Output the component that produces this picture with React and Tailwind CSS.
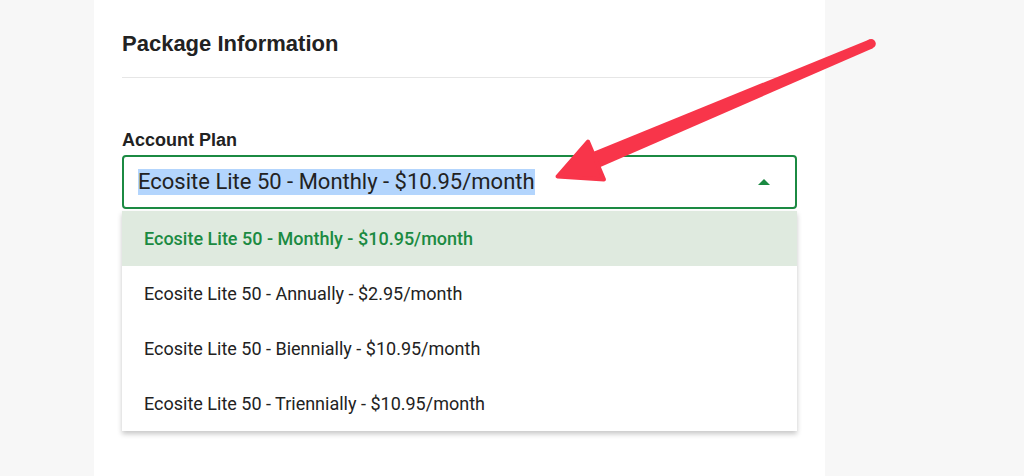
import React from 'react';

const plans = [
  'Ecosite Lite 50 - Monthly - $10.95/month',
  'Ecosite Lite 50 - Annually - $2.95/month',
  'Ecosite Lite 50 - Biennially - $10.95/month',
  'Ecosite Lite 50 - Triennially - $10.95/month',
];

function PointerArrow() {
  return (
    <svg
      className="absolute left-0 top-0 pointer-events-none"
      width="1024"
      height="476"
      viewBox="0 0 1024 476"
    >
      <polygon
        points="590.5,153 869.3,39.5 872.9,48.2 597,168.4"
        fill="#f8354a"
      />
      <circle cx="871.1" cy="43.8" r="4.7" fill="#f8354a" />
      <polygon
        points="557.5,176.5 588,141.5 604,179.5"
        fill="#f8354a"
        stroke="#f8354a"
        strokeWidth="4"
        strokeLinejoin="round"
      />
    </svg>
  );
}

export default function App() {
  const selected = 0;

  return (
    <div className="relative w-[1024px] h-[476px] overflow-hidden bg-[#f7f7f7]">
      <div className="ml-[94px] w-[731px] h-full bg-white px-[28px] pt-[33px]">
        {/* section header */}
        <h2 className="text-[22px] leading-[22px] font-bold text-[#222] font-['Liberation_Sans',Arial,sans-serif]">
          Package Information
        </h2>
        <div className="mt-[22px] h-px bg-[#e6e6e6]" />

        {/* plan field */}
        <label className="block mt-[53px] text-[18px] leading-[18px] font-bold text-[#222] font-['Liberation_Sans',Arial,sans-serif]">
          Account Plan
        </label>
        <div className="mt-[6px] h-[54px] border-2 border-[#1b8a42] rounded-[4px] flex items-center justify-between pl-[14px] pr-[25px] font-['Roboto',sans-serif]">
          <span className="inline-block text-[22px] leading-[26px] text-[#222] bg-[#b3d5fd]">
            {plans[selected]}
          </span>
          <svg width="12" height="6" viewBox="0 0 12 6">
            <polygon points="0,6 6,0 12,6" fill="#1b8a42" />
          </svg>
        </div>

        {/* open dropdown */}
        <div className="mt-[2px] bg-white shadow-[0_3px_5px_rgba(0,0,0,0.22)] font-['Roboto',sans-serif]">
          {plans.map((plan, i) => (
            <div
              key={plan}
              className={
                i === selected
                  ? 'h-[55px] flex items-center pl-[22px] text-[18px] font-medium text-[#1b8a42] bg-[#dfeadf]'
                  : 'h-[55px] flex items-center pl-[22px] text-[18px] text-[#222]'
              }
            >
              {plan}
            </div>
          ))}
        </div>
      </div>

      <PointerArrow />
    </div>
  );
}
